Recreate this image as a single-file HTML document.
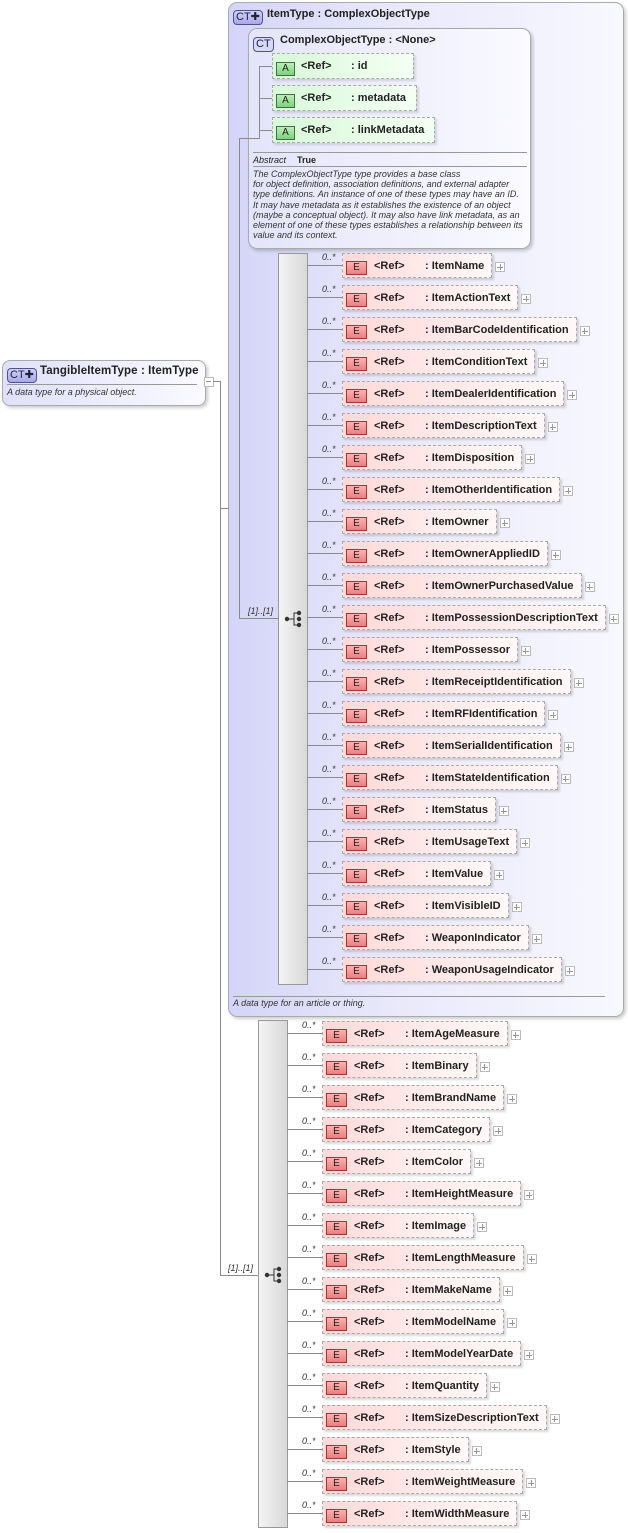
<!DOCTYPE html>
<html><head><meta charset="utf-8"><style>
body{margin:0;width:628px;height:1533px;background:#fff;position:relative;overflow:hidden;font-family:"Liberation Sans",Arial,sans-serif;}
.a{position:absolute}
.ln{position:absolute;background:#8a8a8a}
.r{position:absolute;height:26px;width:330px}
.r .l{position:absolute;left:0;top:12px;width:35px;height:1px;background:#8a8a8a}
.r .m{position:absolute;left:15px;top:-1px;font-size:9px;font-style:italic;color:#333}
.bx{position:absolute;left:35px;top:0;height:23px;border:1px dashed #aaa;background:linear-gradient(90deg,#ffd8d8,#fff0f0 70%,#fff8f8);box-shadow:2px 2px 2px rgba(0,0,0,.15);white-space:nowrap;font-size:11px;font-weight:bold;color:#222;padding-right:7px}
.bx .e{display:inline-block;position:relative;margin-left:3px;top:7px;width:19px;height:12px;border:1px solid #a03838;background:linear-gradient(#ffb0b0,#e88080);font-size:10px;font-weight:normal;text-align:center;line-height:12px;vertical-align:top;color:#222}
.bx .rf{display:inline-block;width:51px;margin-left:7px;position:relative;top:6px;vertical-align:top}
.bx .n{display:inline-block;position:relative;top:6px;vertical-align:top}
.bx .p{position:absolute;right:-14px;top:8px;width:8px;height:8px;border:1px solid #bbb;background:#fff}
.bx .p:before{content:"";position:absolute;left:1px;top:3.5px;width:6px;height:1px;background:#999}
.bx .p:after{content:"";position:absolute;left:3.5px;top:1px;width:1px;height:6px;background:#999}
.at{position:absolute;left:272px;height:24px;border:1px dashed #aaa;background:linear-gradient(90deg,#d8f8d8,#f4fff4);font-size:11px;font-weight:bold;color:#222;white-space:nowrap;box-shadow:2px 2px 2px rgba(0,0,0,.12)}
.at .ai{position:absolute;left:3px;top:8px;width:17px;height:12px;border:1px solid #407040;background:linear-gradient(#b8f0b8,#80d080);font-size:10px;font-weight:normal;text-align:center;line-height:12px}
.at .t1{position:absolute;left:28px;top:6px}
.at .t2{position:absolute;left:78px;top:6px}
.seq{position:absolute;border:1px solid #999;background:linear-gradient(90deg,#f4f4f4,#d8d8d8);}
.ct{display:inline-block;border:1px solid #505090;border-radius:4px;background:linear-gradient(#d0d0ff,#a8a8e8);font-size:11px;padding:0 2px;line-height:13px;color:#223}
</style></head><body>

<div class="a" style="left:228px;top:2px;width:394px;height:1013px;border:1px solid #aaa;border-radius:9px;background:linear-gradient(90deg,#d4d4f8,#e8e8fa 40%,#f8f8ff);box-shadow:2px 2px 3px rgba(0,0,0,.2)"></div>
<div class="a" style="left:233px;top:7px"><span class="ct">CT✚</span></div>
<div class="a" style="left:267px;top:8px;font-size:11px;font-weight:bold;color:#222">ItemType : ComplexObjectType</div>

<div class="a" style="left:248px;top:28px;width:281px;height:219px;border:1px solid #aaa;border-radius:9px;background:linear-gradient(90deg,#e4e4fa,#fafaff);box-shadow:2px 2px 3px rgba(0,0,0,.2)"></div>
<div class="a" style="left:253px;top:34px"><span class="ct" style="background:#d8d8f8">CT</span></div>
<div class="a" style="left:280px;top:34px;font-size:11px;font-weight:bold;color:#222">ComplexObjectType : &lt;None&gt;</div>

<div class="at" style="top:53px;width:140px"><span class="ai">A</span><span class="t1">&lt;Ref&gt;</span><span class="t2">: id</span></div>
<div class="at" style="top:85px;width:143px"><span class="ai">A</span><span class="t1">&lt;Ref&gt;</span><span class="t2">: metadata</span></div>
<div class="at" style="top:117px;width:161px"><span class="ai">A</span><span class="t1">&lt;Ref&gt;</span><span class="t2">: linkMetadata</span></div>
<div class="ln" style="left:259px;top:66px;width:1px;height:72px"></div>
<div class="ln" style="left:259px;top:66px;width:13px;height:1px"></div>
<div class="ln" style="left:259px;top:98px;width:13px;height:1px"></div>
<div class="ln" style="left:259px;top:130px;width:13px;height:1px"></div>
<div class="ln" style="left:239px;top:138px;width:21px;height:1px"></div>

<div class="ln" style="left:253px;top:152px;width:274px;height:1px;background:#999"></div>
<div class="a" style="left:253px;top:155px;font-size:9px;font-style:italic;color:#222">Abstract</div>
<div class="a" style="left:297px;top:155px;font-size:9px;font-weight:bold;color:#222">True</div>
<div class="ln" style="left:253px;top:166px;width:274px;height:1px;background:#999"></div>
<div class="a" style="left:253px;top:169px;font-size:9px;font-style:italic;color:#333;line-height:10.2px;white-space:nowrap">The ComplexObjectType type provides a base class<br>for object definition, association definitions, and external adapter<br>type definitions. An instance of one of these types may have an ID.<br>It may have metadata as it establishes the existence of an object<br>(maybe a conceptual object). It may also have link metadata, as an<br>element of one of these types establishes a relationship between its<br>value and its context.</div>

<div class="ln" style="left:239px;top:138px;width:1px;height:481px"></div>
<div class="ln" style="left:239px;top:618px;width:40px;height:1px"></div>
<div class="a" style="left:248px;top:606px;font-size:9px;font-style:italic;color:#333">[1]..[1]</div>
<div class="seq" style="left:278px;top:253px;width:28px;height:730px"></div>
<svg class="a" style="left:284px;top:610px" width="20" height="18"><circle cx="3" cy="9" r="2.2" fill="#333"/><line x1="3" y1="9" x2="10" y2="9" stroke="#333"/><path d="M15 3H10V15H15" fill="none" stroke="#333"/><circle cx="15" cy="3" r="2.2" fill="#333"/><circle cx="15" cy="9" r="2.2" fill="#333"/><circle cx="15" cy="15" r="2.2" fill="#333"/></svg>

<div class="r" style="left:307px;top:253px"><div class="l"></div><div class="m">0..*</div><div class="bx"><span class="e">E</span><span class="rf">&lt;Ref&gt;</span><span class="n">: ItemName</span><span class="p"></span></div></div>
<div class="r" style="left:307px;top:285px"><div class="l"></div><div class="m">0..*</div><div class="bx"><span class="e">E</span><span class="rf">&lt;Ref&gt;</span><span class="n">: ItemActionText</span><span class="p"></span></div></div>
<div class="r" style="left:307px;top:317px"><div class="l"></div><div class="m">0..*</div><div class="bx"><span class="e">E</span><span class="rf">&lt;Ref&gt;</span><span class="n">: ItemBarCodeIdentification</span><span class="p"></span></div></div>
<div class="r" style="left:307px;top:349px"><div class="l"></div><div class="m">0..*</div><div class="bx"><span class="e">E</span><span class="rf">&lt;Ref&gt;</span><span class="n">: ItemConditionText</span><span class="p"></span></div></div>
<div class="r" style="left:307px;top:381px"><div class="l"></div><div class="m">0..*</div><div class="bx"><span class="e">E</span><span class="rf">&lt;Ref&gt;</span><span class="n">: ItemDealerIdentification</span><span class="p"></span></div></div>
<div class="r" style="left:307px;top:413px"><div class="l"></div><div class="m">0..*</div><div class="bx"><span class="e">E</span><span class="rf">&lt;Ref&gt;</span><span class="n">: ItemDescriptionText</span><span class="p"></span></div></div>
<div class="r" style="left:307px;top:445px"><div class="l"></div><div class="m">0..*</div><div class="bx"><span class="e">E</span><span class="rf">&lt;Ref&gt;</span><span class="n">: ItemDisposition</span><span class="p"></span></div></div>
<div class="r" style="left:307px;top:477px"><div class="l"></div><div class="m">0..*</div><div class="bx"><span class="e">E</span><span class="rf">&lt;Ref&gt;</span><span class="n">: ItemOtherIdentification</span><span class="p"></span></div></div>
<div class="r" style="left:307px;top:509px"><div class="l"></div><div class="m">0..*</div><div class="bx"><span class="e">E</span><span class="rf">&lt;Ref&gt;</span><span class="n">: ItemOwner</span><span class="p"></span></div></div>
<div class="r" style="left:307px;top:541px"><div class="l"></div><div class="m">0..*</div><div class="bx"><span class="e">E</span><span class="rf">&lt;Ref&gt;</span><span class="n">: ItemOwnerAppliedID</span><span class="p"></span></div></div>
<div class="r" style="left:307px;top:573px"><div class="l"></div><div class="m">0..*</div><div class="bx"><span class="e">E</span><span class="rf">&lt;Ref&gt;</span><span class="n">: ItemOwnerPurchasedValue</span><span class="p"></span></div></div>
<div class="r" style="left:307px;top:605px"><div class="l"></div><div class="m">0..*</div><div class="bx"><span class="e">E</span><span class="rf">&lt;Ref&gt;</span><span class="n">: ItemPossessionDescriptionText</span><span class="p"></span></div></div>
<div class="r" style="left:307px;top:637px"><div class="l"></div><div class="m">0..*</div><div class="bx"><span class="e">E</span><span class="rf">&lt;Ref&gt;</span><span class="n">: ItemPossessor</span><span class="p"></span></div></div>
<div class="r" style="left:307px;top:669px"><div class="l"></div><div class="m">0..*</div><div class="bx"><span class="e">E</span><span class="rf">&lt;Ref&gt;</span><span class="n">: ItemReceiptIdentification</span><span class="p"></span></div></div>
<div class="r" style="left:307px;top:701px"><div class="l"></div><div class="m">0..*</div><div class="bx"><span class="e">E</span><span class="rf">&lt;Ref&gt;</span><span class="n">: ItemRFIdentification</span><span class="p"></span></div></div>
<div class="r" style="left:307px;top:733px"><div class="l"></div><div class="m">0..*</div><div class="bx"><span class="e">E</span><span class="rf">&lt;Ref&gt;</span><span class="n">: ItemSerialIdentification</span><span class="p"></span></div></div>
<div class="r" style="left:307px;top:765px"><div class="l"></div><div class="m">0..*</div><div class="bx"><span class="e">E</span><span class="rf">&lt;Ref&gt;</span><span class="n">: ItemStateIdentification</span><span class="p"></span></div></div>
<div class="r" style="left:307px;top:797px"><div class="l"></div><div class="m">0..*</div><div class="bx"><span class="e">E</span><span class="rf">&lt;Ref&gt;</span><span class="n">: ItemStatus</span><span class="p"></span></div></div>
<div class="r" style="left:307px;top:829px"><div class="l"></div><div class="m">0..*</div><div class="bx"><span class="e">E</span><span class="rf">&lt;Ref&gt;</span><span class="n">: ItemUsageText</span><span class="p"></span></div></div>
<div class="r" style="left:307px;top:861px"><div class="l"></div><div class="m">0..*</div><div class="bx"><span class="e">E</span><span class="rf">&lt;Ref&gt;</span><span class="n">: ItemValue</span><span class="p"></span></div></div>
<div class="r" style="left:307px;top:893px"><div class="l"></div><div class="m">0..*</div><div class="bx"><span class="e">E</span><span class="rf">&lt;Ref&gt;</span><span class="n">: ItemVisibleID</span><span class="p"></span></div></div>
<div class="r" style="left:307px;top:925px"><div class="l"></div><div class="m">0..*</div><div class="bx"><span class="e">E</span><span class="rf">&lt;Ref&gt;</span><span class="n">: WeaponIndicator</span><span class="p"></span></div></div>
<div class="r" style="left:307px;top:957px"><div class="l"></div><div class="m">0..*</div><div class="bx"><span class="e">E</span><span class="rf">&lt;Ref&gt;</span><span class="n">: WeaponUsageIndicator</span><span class="p"></span></div></div>

<div class="ln" style="left:233px;top:996px;width:372px;height:1px;background:#999"></div>
<div class="a" style="left:233px;top:998px;font-size:9px;font-style:italic;color:#333">A data type for an article or thing.</div>

<div class="a" style="left:2px;top:360px;width:202px;height:44px;border:1px solid #aaa;border-radius:8px;background:linear-gradient(90deg,#e0e0fa,#fafaff);box-shadow:2px 2px 3px rgba(0,0,0,.2)"></div>
<div class="a" style="left:7px;top:365px"><span class="ct">CT✚</span></div>
<div class="a" style="left:40px;top:365px;font-size:11.5px;font-weight:bold;color:#222;letter-spacing:0.1px">TangibleItemType : ItemType</div>
<div class="ln" style="left:7px;top:384px;width:190px;height:1px;background:#999"></div>
<div class="a" style="left:7px;top:387px;font-size:9px;font-style:italic;color:#333">A data type for a physical object.</div>
<div class="a" style="left:204px;top:377px;width:8px;height:8px;border:1px solid #bbb;background:#fff"></div>
<div class="ln" style="left:206px;top:381px;width:5px;height:1px;background:#999"></div>
<div class="ln" style="left:213px;top:381px;width:8px;height:1px"></div>
<div class="ln" style="left:220px;top:381px;width:1px;height:895px"></div>
<div class="ln" style="left:220px;top:508px;width:9px;height:1px"></div>
<div class="ln" style="left:220px;top:1275px;width:39px;height:1px"></div>
<div class="a" style="left:228px;top:1263px;font-size:9px;font-style:italic;color:#333">[1]..[1]</div>

<div class="seq" style="left:258px;top:1020px;width:28px;height:506px"></div>
<svg class="a" style="left:264px;top:1266px" width="20" height="18"><circle cx="3" cy="9" r="2.2" fill="#333"/><line x1="3" y1="9" x2="10" y2="9" stroke="#333"/><path d="M15 3H10V15H15" fill="none" stroke="#333"/><circle cx="15" cy="3" r="2.2" fill="#333"/><circle cx="15" cy="9" r="2.2" fill="#333"/><circle cx="15" cy="15" r="2.2" fill="#333"/></svg>

<div class="r" style="left:287px;top:1021px"><div class="l"></div><div class="m">0..*</div><div class="bx"><span class="e">E</span><span class="rf">&lt;Ref&gt;</span><span class="n">: ItemAgeMeasure</span><span class="p"></span></div></div>
<div class="r" style="left:287px;top:1053px"><div class="l"></div><div class="m">0..*</div><div class="bx"><span class="e">E</span><span class="rf">&lt;Ref&gt;</span><span class="n">: ItemBinary</span><span class="p"></span></div></div>
<div class="r" style="left:287px;top:1085px"><div class="l"></div><div class="m">0..*</div><div class="bx"><span class="e">E</span><span class="rf">&lt;Ref&gt;</span><span class="n">: ItemBrandName</span><span class="p"></span></div></div>
<div class="r" style="left:287px;top:1117px"><div class="l"></div><div class="m">0..*</div><div class="bx"><span class="e">E</span><span class="rf">&lt;Ref&gt;</span><span class="n">: ItemCategory</span><span class="p"></span></div></div>
<div class="r" style="left:287px;top:1149px"><div class="l"></div><div class="m">0..*</div><div class="bx"><span class="e">E</span><span class="rf">&lt;Ref&gt;</span><span class="n">: ItemColor</span><span class="p"></span></div></div>
<div class="r" style="left:287px;top:1181px"><div class="l"></div><div class="m">0..*</div><div class="bx"><span class="e">E</span><span class="rf">&lt;Ref&gt;</span><span class="n">: ItemHeightMeasure</span><span class="p"></span></div></div>
<div class="r" style="left:287px;top:1213px"><div class="l"></div><div class="m">0..*</div><div class="bx"><span class="e">E</span><span class="rf">&lt;Ref&gt;</span><span class="n">: ItemImage</span><span class="p"></span></div></div>
<div class="r" style="left:287px;top:1245px"><div class="l"></div><div class="m">0..*</div><div class="bx"><span class="e">E</span><span class="rf">&lt;Ref&gt;</span><span class="n">: ItemLengthMeasure</span><span class="p"></span></div></div>
<div class="r" style="left:287px;top:1277px"><div class="l"></div><div class="m">0..*</div><div class="bx"><span class="e">E</span><span class="rf">&lt;Ref&gt;</span><span class="n">: ItemMakeName</span><span class="p"></span></div></div>
<div class="r" style="left:287px;top:1309px"><div class="l"></div><div class="m">0..*</div><div class="bx"><span class="e">E</span><span class="rf">&lt;Ref&gt;</span><span class="n">: ItemModelName</span><span class="p"></span></div></div>
<div class="r" style="left:287px;top:1341px"><div class="l"></div><div class="m">0..*</div><div class="bx"><span class="e">E</span><span class="rf">&lt;Ref&gt;</span><span class="n">: ItemModelYearDate</span><span class="p"></span></div></div>
<div class="r" style="left:287px;top:1373px"><div class="l"></div><div class="m">0..*</div><div class="bx"><span class="e">E</span><span class="rf">&lt;Ref&gt;</span><span class="n">: ItemQuantity</span><span class="p"></span></div></div>
<div class="r" style="left:287px;top:1405px"><div class="l"></div><div class="m">0..*</div><div class="bx"><span class="e">E</span><span class="rf">&lt;Ref&gt;</span><span class="n">: ItemSizeDescriptionText</span><span class="p"></span></div></div>
<div class="r" style="left:287px;top:1437px"><div class="l"></div><div class="m">0..*</div><div class="bx"><span class="e">E</span><span class="rf">&lt;Ref&gt;</span><span class="n">: ItemStyle</span><span class="p"></span></div></div>
<div class="r" style="left:287px;top:1469px"><div class="l"></div><div class="m">0..*</div><div class="bx"><span class="e">E</span><span class="rf">&lt;Ref&gt;</span><span class="n">: ItemWeightMeasure</span><span class="p"></span></div></div>
<div class="r" style="left:287px;top:1501px"><div class="l"></div><div class="m">0..*</div><div class="bx"><span class="e">E</span><span class="rf">&lt;Ref&gt;</span><span class="n">: ItemWidthMeasure</span><span class="p"></span></div></div>

</body></html>
